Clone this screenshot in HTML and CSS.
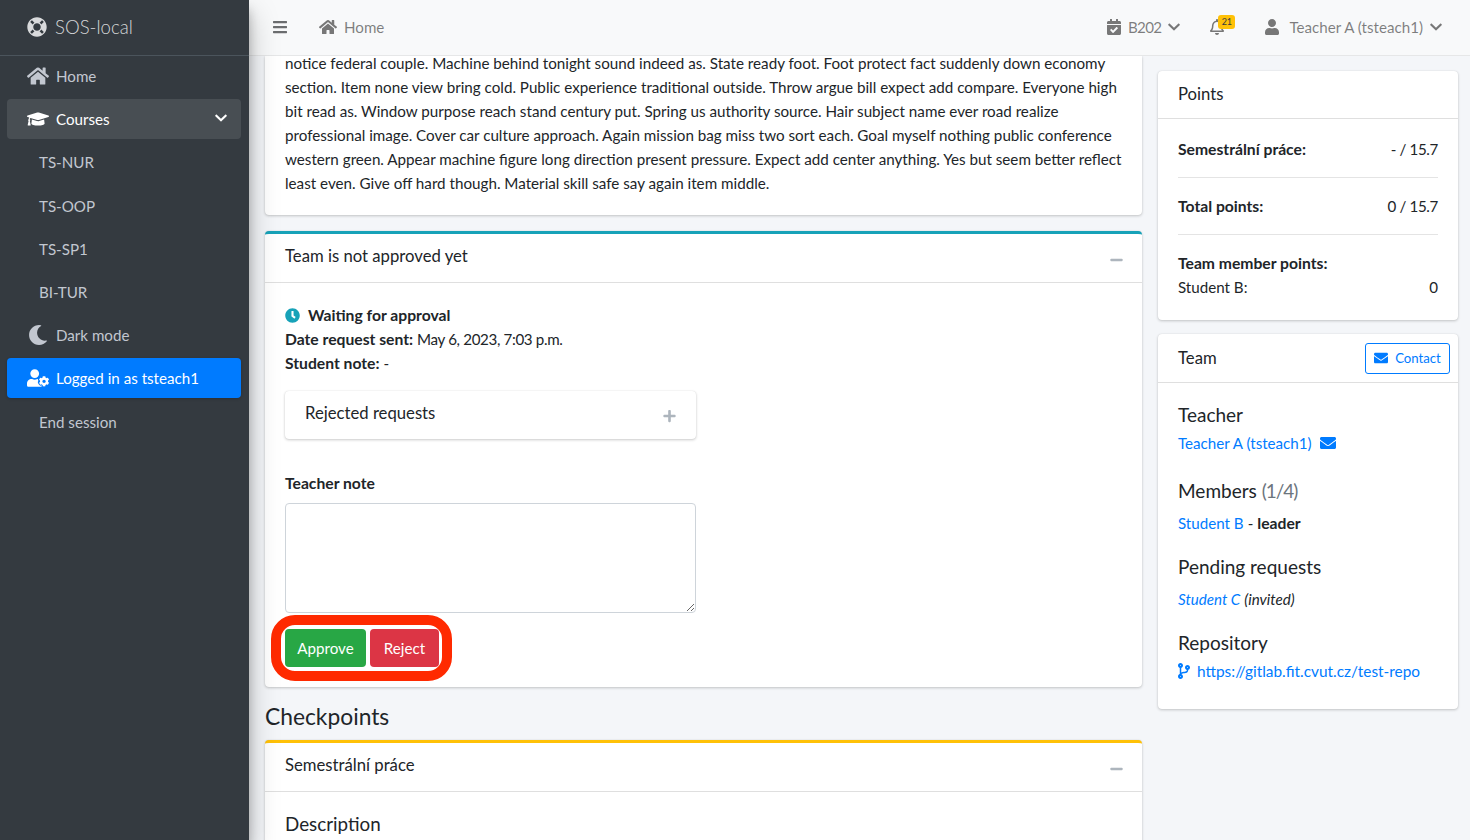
FILE: index.html
```html
<!DOCTYPE html>
<html lang="en">
<head>
<meta charset="utf-8">
<title>SOS-local</title>
<link rel="stylesheet" href="styles.css">
</head>
<body>
<svg class="sprite" aria-hidden="true">
  <symbol id="i-ring" viewBox="0 0 512 512"><path d="M256 8C119.033 8 8 119.033 8 256s111.033 248 248 248 248-111.033 248-248S392.967 8 256 8zm173.696 119.559l-63.399 63.399c-10.987-18.559-26.67-34.252-45.255-45.255l63.399-63.399a218.396 218.396 0 0 1 45.255 45.255zM256 352c-53.019 0-96-42.981-96-96s42.981-96 96-96 96 42.981 96 96-42.981 96-96 96zM127.559 82.304l63.399 63.399c-18.559 10.987-34.252 26.67-45.255 45.255l-63.399-63.399a218.372 218.372 0 0 1 45.255-45.255zM82.304 384.441l63.399-63.399c10.987 18.559 26.67 34.252 45.255 45.255l-63.399 63.399a218.396 218.396 0 0 1-45.255-45.255zm302.137 45.255l-63.399-63.399c18.559-10.987 34.252-26.67 45.255-45.255l63.399 63.399a218.403 218.403 0 0 1-45.255 45.255z"/></symbol>
  <symbol id="i-home" viewBox="0 0 576 512"><path d="M280.37 148.26L96 300.11V464a16 16 0 0 0 16 16l112.06-.29a16 16 0 0 0 15.92-16V368a16 16 0 0 1 16-16h64a16 16 0 0 1 16 16v95.64a16 16 0 0 0 16 16.05L464 480a16 16 0 0 0 16-16V300L295.67 148.26a12.19 12.19 0 0 0-15.3 0zM571.6 251.47L488 182.56V44.05a12 12 0 0 0-12-12h-56a12 12 0 0 0-12 12v72.61L318.47 43a48 48 0 0 0-61 0L4.34 251.47a12 12 0 0 0-1.6 16.9l25.5 31A12 12 0 0 0 45.15 301l235.22-193.74a12.19 12.19 0 0 1 15.3 0L530.9 301a12 12 0 0 0 16.9-1.6l25.5-31a12 12 0 0 0-1.7-16.93z"/></symbol>
  <symbol id="i-cap" viewBox="0 0 640 512"><path d="M622.34 153.2L343.4 67.5c-15.2-4.67-31.6-4.67-46.79 0L17.66 153.2c-23.54 7.23-23.54 38.36 0 45.59l48.63 14.94c-10.67 13.19-17.23 29.28-17.88 46.9C38.78 266.15 32 276.11 32 288c0 10.78 5.68 19.85 13.86 25.65L20.33 428.53C18.11 438.52 25.71 448 35.94 448h56.11c10.24 0 17.84-9.48 15.62-19.47L82.14 313.65C90.32 307.85 96 298.78 96 288c0-11.57-6.47-21.25-15.66-26.87.76-15.02 8.44-28.3 20.69-36.72L296.6 284.5c9.06 2.78 26.44 6.25 46.79 0l278.95-85.7c23.55-7.24 23.55-38.36 0-45.6zM352.79 315.09c-28.53 8.76-52.84 3.92-65.59 0l-145.02-44.55L128 384c0 35.35 85.96 64 192 64s192-28.65 192-64l-14.18-113.47-145.03 44.56z"/></symbol>
  <symbol id="i-moon" viewBox="0 0 512 512"><path d="M283.211 512c78.962 0 151.079-35.925 198.857-94.792 7.068-8.708-.639-21.43-11.562-19.35-124.203 23.654-238.262-71.576-238.262-196.954 0-72.222 38.662-138.635 101.498-174.394 9.686-5.512 7.25-20.197-3.756-22.23A258.156 258.156 0 0 0 283.211 0c-141.309 0-256 114.511-256 256 0 141.309 114.511 256 256 256z"/></symbol>
  <symbol id="i-usercog" viewBox="0 0 640 512"><path d="M224 256a128 128 0 1 0 0-256 128 128 0 1 0 0 256zM313.6 288h-16.7c-22.2 10.2-46.9 16-72.9 16s-50.6-5.8-72.9-16h-16.7C60.2 288 0 348.2 0 422.4V464c0 26.5 21.5 48 48 48h352c13 0 24.8-5.2 33.4-13.6-3-6-4.6-12.6-4.6-19.6v-12.2l-10.6 6c-7 4-14.8 6-22.8 6-13.2 0-25.8-5.6-34.6-15.4-20-22-35.4-48.6-44.4-77-5.4-17 .4-35.2 14.2-45.6z"/><path d="M610.5 373.3c2.6-14.1 2.6-28.5 0-42.6l25.8-14.9c3-1.7 4.3-5.2 3.3-8.5-6.7-21.6-18.2-41.2-33.2-57.4-2.3-2.5-6-3.1-9-1.4l-25.8 14.9c-10.9-9.3-23.4-16.5-36.9-21.3v-29.8c0-3.4-2.4-6.4-5.7-7.1-22.3-5-45-4.8-66.2 0-3.3.7-5.7 3.7-5.7 7.1v29.8c-13.5 4.8-26 12-36.9 21.3l-25.8-14.9c-2.9-1.7-6.7-1.1-9 1.4-15 16.2-26.5 35.8-33.2 57.4-1 3.3.4 6.8 3.3 8.5l25.8 14.9c-2.6 14.1-2.6 28.5 0 42.6l-25.8 14.9c-3 1.7-4.3 5.2-3.3 8.5 6.7 21.6 18.2 41.1 33.2 57.4 2.3 2.5 6 3.1 9 1.4l25.8-14.9c10.9 9.3 23.4 16.5 36.9 21.3v29.8c0 3.4 2.4 6.4 5.7 7.1 22.3 5 45 4.8 66.2 0 3.3-.7 5.7-3.7 5.7-7.1v-29.8c13.5-4.8 26-12 36.9-21.3l25.8 14.9c2.9 1.7 6.7 1.1 9-1.4 15-16.2 26.5-35.8 33.2-57.4 1-3.3-.4-6.8-3.3-8.5l-25.8-14.9zM496 400.5c-26.8 0-48.5-21.8-48.5-48.5s21.8-48.5 48.5-48.5 48.5 21.8 48.5 48.5-21.7 48.5-48.5 48.5z"/></symbol>
  <symbol id="i-chev" viewBox="0 0 448 512"><path d="M207.029 381.476L12.686 187.132c-9.373-9.373-9.373-24.569 0-33.941l22.667-22.667c9.357-9.357 24.522-9.375 33.901-.04L224 284.505l154.745-154.021c9.379-9.335 24.544-9.317 33.901.04l22.667 22.667c9.373 9.373 9.373 24.569 0 33.941L240.971 381.476c-9.373 9.372-24.569 9.372-33.942 0z"/></symbol>
  <symbol id="i-bars" viewBox="0 0 448 512"><path d="M16 132h416c8.837 0 16-7.163 16-16V76c0-8.837-7.163-16-16-16H16C7.163 60 0 67.163 0 76v40c0 8.837 7.163 16 16 16zm0 160h416c8.837 0 16-7.163 16-16v-40c0-8.837-7.163-16-16-16H16c-8.837 0-16 7.163-16 16v40c0 8.837 7.163 16 16 16zm0 160h416c8.837 0 16-7.163 16-16v-40c0-8.837-7.163-16-16-16H16c-8.837 0-16 7.163-16 16v40c0 8.837 7.163 16 16 16z"/></symbol>
  <symbol id="i-cal" viewBox="0 0 448 512"><path d="M436 160H12c-6.627 0-12-5.373-12-12v-36c0-26.51 21.49-48 48-48h48V12c0-6.627 5.373-12 12-12h40c6.627 0 12 5.373 12 12v52h128V12c0-6.627 5.373-12 12-12h40c6.627 0 12 5.373 12 12v52h48c26.51 0 48 21.49 48 48v36c0 6.627-5.373 12-12 12zM12 192h424c6.627 0 12 5.373 12 12v260c0 26.51-21.49 48-48 48H48c-26.51 0-48-21.49-48-48V204c0-6.627 5.373-12 12-12zm333.296 95.947l-28.169-28.398c-4.667-4.705-12.265-4.736-16.97-.068L194.12 364.665l-45.98-46.352c-4.667-4.705-12.265-4.736-16.97-.068l-28.397 28.17c-4.705 4.667-4.736 12.265-.068 16.97l82.601 83.269c4.667 4.705 12.265 4.736 16.97.068l142.953-141.805c4.705-4.667 4.736-12.265.068-16.97z"/></symbol>
  <symbol id="i-bell" viewBox="0 0 448 512"><path d="M439.39 362.29c-19.32-20.76-55.47-51.99-55.47-154.29 0-77.7-54.48-139.9-127.94-155.16V32c0-17.67-14.32-32-31.98-32s-31.98 14.33-31.98 32v20.84C118.56 68.1 64.08 130.3 64.08 208c0 102.3-36.15 133.53-55.47 154.29-6 6.45-8.66 14.16-8.61 21.71.11 16.4 12.98 32 32.1 32h383.8c19.12 0 32-15.6 32.1-32 .05-7.55-2.61-15.27-8.61-21.71zM67.53 368c21.22-27.97 44.42-74.33 44.53-159.42 0-.2-.06-.38-.06-.58 0-61.86 50.14-112 112-112s112 50.14 112 112c0 .2-.06.38-.06.58.11 85.1 23.31 131.46 44.53 159.42H67.53zM224 512c35.32 0 63.97-28.65 63.97-64H160.03c0 35.35 28.65 64 63.97 64z"/></symbol>
  <symbol id="i-user" viewBox="0 0 448 512"><path d="M224 256c70.7 0 128-57.3 128-128S294.7 0 224 0 96 57.3 96 128s57.3 128 128 128zm89.6 32h-16.7c-22.2 10.2-46.9 16-72.9 16s-50.6-5.8-72.9-16h-16.7C60.2 288 0 348.2 0 422.4V464c0 26.5 21.5 48 48 48h352c26.5 0 48-21.5 48-48v-41.6c0-74.2-60.2-134.4-134.4-134.4z"/></symbol>
  <symbol id="i-mail" viewBox="0 0 512 512"><path d="M502.3 190.8c3.9-3.1 9.7-.2 9.7 4.7V400c0 26.5-21.5 48-48 48H48c-26.5 0-48-21.5-48-48V195.6c0-5 5.7-7.8 9.7-4.7 22.4 17.4 52.1 39.5 154.1 113.6 21.1 15.4 56.7 47.8 92.2 47.6 35.7.3 72-32.8 92.3-47.6 102-74.1 131.6-96.3 154-113.7zM256 320c23.2.4 56.6-29.2 73.4-41.4 132.7-96.3 142.8-104.7 173.4-128.7 5.8-4.5 9.2-11.5 9.2-18.9v-19c0-26.5-21.5-48-48-48H48C21.5 64 0 85.5 0 112v19c0 7.4 3.4 14.3 9.2 18.9 30.6 23.9 40.7 32.4 173.4 128.7 16.8 12.2 50.2 41.8 73.4 41.4z"/></symbol>
  <symbol id="i-branch" viewBox="0 0 384 512"><path d="M384 144c0-44.2-35.8-80-80-80s-80 35.8-80 80c0 36.4 24.3 67.1 57.5 76.8-.6 16.1-4.2 28.5-11 36.9-15.4 19.2-49.3 22.4-85.2 25.7-28.2 2.6-57.4 5.4-81.3 16.9v-144c32.5-10.2 56-40.5 56-76.3 0-44.2-35.8-80-80-80S0 35.8 0 80c0 35.8 23.5 66.1 56 76.3v199.3C23.5 365.9 0 396.2 0 432c0 44.2 35.8 80 80 80s80-35.8 80-80c0-34-21.2-63.1-51.2-74.6 3.1-5.2 7.8-9.8 14.9-13.4 16.2-8.2 40.4-10.4 66.1-12.8 42.2-3.9 90-8.4 118.2-43.4 14-17.4 21.1-39.8 21.6-67.9 31.6-10.8 54.4-40.7 54.4-75.9zM80 64c8.8 0 16 7.2 16 16s-7.2 16-16 16-16-7.2-16-16 7.2-16 16-16zm0 384c-8.8 0-16-7.2-16-16s7.2-16 16-16 16 7.2 16 16-7.2 16-16 16zm224-320c8.8 0 16 7.2 16 16s-7.2 16-16 16-16-7.2-16-16 7.2-16 16-16z"/></symbol>
  <symbol id="i-clock" viewBox="0 0 512 512"><path d="M256 8C119 8 8 119 8 256s111 248 248 248 248-111 248-248S393 8 256 8zm57.1 350.100L224.900 294c-3.100-2.300-4.900-5.900-4.900-9.700V116c0-6.600 5.400-12 12-12h48c6.600 0 12 5.400 12 12v137.700l63.500 46.200c5.400 3.900 6.500 11.400 2.600 16.800l-28.200 38.800c-3.900 5.300-11.400 6.500-16.800 2.600z"/></symbol>
  <symbol id="i-minus" viewBox="0 0 448 512"><path d="M416 208H32c-17.670 0-32 14.330-32 32v32c0 17.670 14.330 32 32 32h384c17.670 0 32-14.330 32-32v-32c0-17.670-14.330-32-32-32z"/></symbol>
  <symbol id="i-plus" viewBox="0 0 448 512"><path d="M416 208H272V64c0-17.670-14.330-32-32-32h-32c-17.670 0-32 14.330-32 32v144H32c-17.670 0-32 14.330-32 32v32c0 17.670 14.330 32 32 32h144v144c0 17.670 14.330 32 32 32h32c17.670 0 32-14.330 32-32V304h144c17.670 0 32-14.330 32-32v-32c0-17.670-14.330-32-32-32z"/></symbol>
</svg>

<div class="app">
  <aside class="sidebar">
    <div class="brand"><svg class="brand-icon"><use href="#i-ring"/></svg><span>SOS-local</span></div>
    <nav class="side-nav">
      <a class="nav-item"><svg class="nav-icon"><use href="#i-home"/></svg>Home</a>
      <a class="nav-item nav-open"><svg class="nav-icon"><use href="#i-cap"/></svg>Courses<svg class="nav-chev"><use href="#i-chev"/></svg></a>
      <a class="nav-item nav-sub">TS-NUR</a>
      <a class="nav-item nav-sub">TS-OOP</a>
      <a class="nav-item nav-sub">TS-SP1</a>
      <a class="nav-item nav-sub">BI-TUR</a>
      <a class="nav-item"><svg class="nav-icon"><use href="#i-moon"/></svg>Dark mode</a>
      <a class="nav-item nav-active"><svg class="nav-icon"><use href="#i-usercog"/></svg>Logged in as tsteach1</a>
      <a class="nav-item nav-sub">End session</a>
    </nav>
  </aside>

  <div class="main">
    <header class="topbar">
      <svg class="top-bars"><use href="#i-bars"/></svg>
      <a class="top-link top-home"><svg class="top-homeicon"><use href="#i-home"/></svg>Home</a>
      <div class="top-right">
        <a class="top-link top-sem"><svg class="top-cal"><use href="#i-cal"/></svg><span class="sem-name">B202</span><svg class="top-chev"><use href="#i-chev"/></svg></a>
        <a class="top-bell"><svg class="top-bellicon"><use href="#i-bell"/></svg><span class="badge">21</span></a>
        <a class="top-link top-user"><svg class="top-usericon"><use href="#i-user"/></svg>Teacher A (tsteach1)<svg class="top-chev"><use href="#i-chev"/></svg></a>
      </div>
    </header>

    <div class="content">
      <div class="col-left">
        <section class="card card-intro">
          <p class="lorem">notice federal couple. Machine behind tonight sound indeed as. State ready foot. Foot protect fact suddenly down economy<br>section. Item none view bring cold. Public experience traditional outside. Throw argue bill expect add compare. Everyone high<br>bit read as. Window purpose reach stand century put. Spring us authority source. Hair subject name ever road realize<br>professional image. Cover car culture approach. Again mission bag miss two sort each. Goal myself nothing public conference<br>western green. Appear machine figure long direction present pressure. Expect add center anything. Yes but seem better reflect<br>least even. Give off hard though. Material skill safe say again item middle.</p>
        </section>

        <section class="card card-info">
          <div class="card-head"><span>Team is not approved yet</span><svg class="tool-icon"><use href="#i-minus"/></svg></div>
          <div class="card-body">
            <div class="line"><svg class="clock"><use href="#i-clock"/></svg><b>Waiting for approval</b></div>
            <div class="line"><b>Date request sent:</b> <span class="tight">May 6, 2023, 7:03 p.m.</span></div>
            <div class="line"><b>Student note:</b> -</div>
            <div class="card card-inner"><span>Rejected requests</span><svg class="tool-icon tool-plus"><use href="#i-plus"/></svg></div>
            <label class="note-label" for="note">Teacher note</label>
            <textarea class="note" id="note"></textarea>
            <div class="actions">
              <button class="btn btn-approve">Approve</button>
              <button class="btn btn-reject">Reject</button>
              <span class="highlight"></span>
            </div>
          </div>
        </section>

        <h4 class="section-title">Checkpoints</h4>
        <section class="card card-warn">
          <div class="card-head"><span>Semestrální práce</span><svg class="tool-icon"><use href="#i-minus"/></svg></div>
          <div class="card-body">
            <h5 class="sub-title">Description</h5>
          </div>
        </section>
      </div>

      <div class="col-right">
        <section class="card card-points">
          <div class="card-head"><span>Points</span></div>
          <div class="points-body">
            <div class="pt-row"><b>Semestrální práce:</b><span class="tight">- / 15.7</span></div>
            <div class="pt-row"><b>Total points:</b><span class="tight">0 / 15.7</span></div>
            <div class="pt-row pt-last">
              <div class="pt-head"><b>Team member points:</b></div>
              <div class="pt-split"><span>Student B:</span><span>0</span></div>
            </div>
          </div>
        </section>

        <section class="card card-team">
          <div class="card-head"><span>Team</span><a class="contact"><svg class="contact-icon"><use href="#i-mail"/></svg>Contact</a></div>
          <div class="team-body">
            <h5 class="team-h">Teacher</h5>
            <div class="team-line"><a class="link">Teacher A (tsteach1)</a><svg class="mail-icon"><use href="#i-mail"/></svg></div>
            <h5 class="team-h team-h-wide">Members <span class="muted">(1/4)</span></h5>
            <div class="team-line team-line-near"><a class="link">Student B</a> - <b>leader</b></div>
            <h5 class="team-h team-h-wide">Pending requests</h5>
            <div class="team-line team-line-near"><a class="link"><i>Student C</i></a> <i>(invited)</i></div>
            <h5 class="team-h">Repository</h5>
            <div class="team-line"><svg class="branch-icon"><use href="#i-branch"/></svg><a class="link url">https://gitlab.fit.cvut.cz/test-repo</a></div>
          </div>
        </section>
      </div>
    </div>
  </div>
</div>
</body>
</html>
```
FILE: styles.css
```css
* { box-sizing: border-box; }
html, body { margin: 0; height: 100%; overflow: hidden; }
body {
  font-family: "Lato", "Noto Sans", sans-serif;
  font-size: 15.15px;
  line-height: 24px;
  color: #212529;
  background: #f4f6f9;
}
b { font-weight: 700; font-size: 15.7px; }
svg { fill: currentColor; flex: none; }
.sprite { display: none; }
.tight { letter-spacing: -.35px; }

.app { display: flex; height: 840px; }

.sidebar {
  width: 249px;
  flex: none;
  background: #343a40;
  color: #c2c7d0;
  box-shadow: 0 14px 28px rgba(0,0,0,.25), 0 10px 10px rgba(0,0,0,.22);
  position: relative;
  z-index: 3;
}
.brand {
  height: 56px;
  display: flex;
  align-items: center;
  padding: 0 0 2px 27px;
  border-bottom: 1px solid #4b545c;
  color: rgba(255,255,255,.8);
  font-size: 18.6px;
  font-weight: 300;
}
.brand-icon { width: 20px; height: 20px; margin-right: 8px; color: #d9dadc; }
.side-nav { padding: 0 8px 0 7px; }
.nav-item {
  height: 40px;
  margin-bottom: 3.2px;
  display: flex;
  align-items: center;
  padding-left: 20px;
  border-radius: 4px;
  white-space: nowrap;
}
.nav-icon { width: 22px; height: 20px; margin-right: 7px; }
.nav-sub { padding-left: 32px; }
.nav-open { background: rgba(255,255,255,.1); color: #fff; position: relative; }
.nav-active { background: #007bff; color: #fff; box-shadow: 0 1px 3px rgba(0,0,0,.2); }
.nav-chev { width: 12px; height: 14px; position: absolute; right: 14px; top: 12px; }

.main { flex: 1; min-width: 0; display: flex; flex-direction: column; height: 840px; overflow: hidden; }
.topbar {
  height: 56px;
  flex: none;
  background: #f8f9fa;
  color: rgba(0,0,0,.5);
  border-bottom: 1px solid #e6e7e8;
  display: flex;
  align-items: center;
  padding: 0 28px 2px 24px;
  position: relative;
  z-index: 2;
}
.top-bars { width: 14px; height: 16px; margin-right: 32px; color: #6b6d6f; }
.top-link { display: flex; align-items: center; white-space: nowrap; }
.top-homeicon { width: 18px; height: 16px; margin-right: 7px; color: #777; }
.top-right { margin-left: auto; display: flex; align-items: center; }
.top-cal { width: 14px; height: 16px; margin-right: 7px; color: #777; }
.sem-name { letter-spacing: -.7px; }
.top-chev { width: 12px; height: 14px; margin-left: 7px; color: #777; }
.top-bell { position: relative; display: block; height: 16px; margin: 0 41px 0 30px; width: 14px; color: #777; }
.top-bellicon { width: 14px; height: 16px; display: block; }
.badge {
  position: absolute;
  left: 8px;
  top: -4px;
  width: 17px;
  height: 14px;
  border-radius: 3px;
  background: #ffc107;
  color: #343a40;
  font-size: 9px;
  line-height: 13px;
  text-align: center;
}
.top-usericon { width: 14px; height: 16px; margin-right: 10px; color: #777; }

.content {
  flex: 1;
  min-height: 0;
  display: flex;
  gap: 16px;
  padding: 0 12px 0 16px;
  background: #f4f6f9;
}
.col-left { width: 877px; flex: none; }
.col-right { width: 300px; flex: none; padding-top: 15px; }

.card {
  background: #fff;
  border-radius: 4px;
  box-shadow: 0 0 1px rgba(0,0,0,.125), 0 1px 3px rgba(0,0,0,.2);
}
.card-intro {
  display: flow-root;
  height: 159px;
  padding: 0 20px;
  margin-bottom: 16px;
  border-radius: 0 0 4px 4px;
}
.lorem { margin: -5px 0 0; white-space: nowrap; font-size: 15.2px; }
.card-info { height: 456px; border-top: 3px solid #17a2b8; }
.card-warn { border-top: 3px solid #ffc107; }
.card-head {
  height: 49px;
  display: flex;
  align-items: center;
  justify-content: space-between;
  padding: 0 20px 5px;
  border-bottom: 1px solid #dfdfdf;
  font-size: 16.7px;
}
.tool-icon { width: 13px; height: 14px; color: #adb5bd; margin: 8px -1px 0 0; }
.card-body { padding: 20px; }
.line { height: 24px; white-space: nowrap; display: flex; align-items: center; gap: 4px; }
.clock { width: 15px; height: 15px; color: #17a2b8; margin-right: 4px; }
.card-inner {
  width: 411px;
  height: 48px;
  margin-top: 16px;
  padding: 0 20px;
  display: flex;
  align-items: center;
  justify-content: space-between;
  font-size: 16.7px;
}
.card-inner span { margin-top: -4px; }
.tool-plus { margin: 2px 0 0; }
.note-label { display: block; margin-top: 32px; height: 24px; font-weight: 700; font-size: 15.7px; }
.note {
  display: block;
  width: 411px;
  height: 110px;
  margin-top: 8px;
  border: 1px solid #ced4da;
  border-radius: 4px;
  background: #fff;
}
.actions { position: relative; display: flex; gap: 4px; margin-top: 16px; }
.btn {
  height: 38px;
  border: 1px solid transparent;
  border-radius: 4px;
  color: #fff;
  font: inherit;
  padding: 0;
}
.btn-approve { width: 81px; background: #28a745; }
.btn-reject { width: 69px; background: #dc3545; }
.highlight {
  position: absolute;
  left: -14px;
  top: -14px;
  width: 181px;
  height: 66px;
  border: 10px solid #ff2a00;
  border-radius: 24px;
}
.section-title { margin: 15px 0 9px; font-size: 22.8px; line-height: 29px; font-weight: 400; }
.sub-title { margin: 0; font-size: 18.8px; line-height: 24px; font-weight: 400; }

.card-points { height: 249px; margin-bottom: 14px; }
.card-points .card-head { height: 48px; padding-bottom: 2px; }
.points-body { padding: 2px 20px 0; }
.pt-row {
  display: flex;
  justify-content: space-between;
  height: 57px;
  align-items: center;
  border-bottom: 1px solid #e4e4e4;
  white-space: nowrap;
}
.pt-last { display: block; border: 0; height: auto; padding-top: 16px; }
.pt-split { display: flex; justify-content: space-between; }

.card-team { height: 375px; }
.card-team .card-head { height: 49px; padding: 0 8px 0 20px; }
.contact {
  width: 85px;
  height: 31px;
  border: 1px solid #007bff;
  border-radius: 3px;
  color: #007bff;
  font-size: 13.2px;
  display: flex;
  align-items: center;
  justify-content: center;
  gap: 7px;
}
.contact-icon { width: 14px; height: 14px; }
.team-body { padding: 20px 20px 0; }
.team-h { margin: 0 0 4px; font-size: 19px; line-height: 24px; font-weight: 400; }
.team-h-wide { margin-bottom: 8px; }
.team-line { height: 24px; margin-bottom: 24px; white-space: nowrap; display: flex; align-items: center; gap: 4px; }
.team-line-near { margin-bottom: 20px; }
.link { color: #007bff; }
.url { font-size: 15.4px; }
.muted { color: #6c757d; letter-spacing: -1px; }
.mail-icon { width: 16px; height: 16px; color: #007bff; margin-left: 4px; }
.branch-icon { width: 12px; height: 16px; color: #007bff; margin-right: 3px; }
```
